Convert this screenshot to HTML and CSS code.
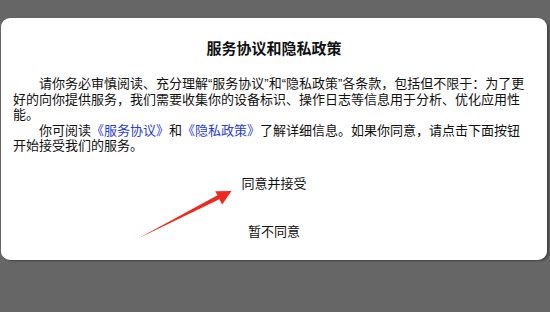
FILE: index.html
```html
<!DOCTYPE html>
<html lang="zh-CN">
<head>
<meta charset="utf-8">
<title>服务协议和隐私政策</title>
<link rel="stylesheet" href="styles.css">
</head>
<body>
<div class="screen">
  <div class="dialog">
    <h1 class="title">服务协议和隐私政策</h1>
    <div class="content">
      <p class="para">请你务必审慎阅读、充分理解“服务协议”和“隐私政策”各条款，包括但不限于：为了更好的向你提供服务，我们需要收集你的设备标识、操作日志等信息用于分析、优化应用性能。</p>
      <p class="para">你可阅读<a class="link">《服务协议》</a>和<a class="link">《隐私政策》</a>了解详细信息。如果你同意，请点击下面按钮开始接受我们的服务。</p>
    </div>
    <div class="actions">
      <div class="btn btn-accept">同意并接受</div>
      <div class="btn btn-reject">暂不同意</div>
    </div>
  </div>
  <svg class="arrow" width="550" height="312" viewBox="0 0 550 312">
    <polygon fill="#ee2a1e" points="138,238.5 219.4,199.3 222.2,204.5 231.5,191 215.2,191.3 217.6,195.3"/>
  </svg>
</div>
</body>
</html>
```
FILE: styles.css
```css
html, body {
  margin: 0;
  padding: 0;
}
body {
  background: #666666;
  font-family: "Liberation Sans", "Noto Sans CJK SC", sans-serif;
  color: #111;
}
.screen {
  position: relative;
  width: 550px;
  height: 312px;
  padding-top: 18px;
  box-sizing: border-box;
}
.dialog {
  margin-left: 1px;
  width: 546px;
  height: 242px;
  background: #fff;
  border-radius: 9px;
  box-shadow: 2px 1px 2px rgba(0, 0, 0, 0.35);
  box-sizing: border-box;
  padding-top: 21px;
  display: flex;
  flex-direction: column;
}
.title {
  margin: 0;
  font-size: 15px;
  line-height: 20px;
  font-weight: bold;
  text-align: center;
  color: #111;
}
.content {
  margin-top: 17px;
  padding: 0 17px 0 12px;
}
.para {
  margin: 0;
  font-size: 13px;
  line-height: 15.5px;
  text-indent: 2em;
}
.link {
  display: inline-block;
  text-indent: 0;
  line-height: 15.5px;
  color: #2a3dcf;
}
.actions {
  margin-top: 9px;
  display: flex;
  flex-direction: column;
  align-items: center;
}
.btn {
  height: 40px;
  display: flex;
  align-items: center;
  justify-content: center;
  font-size: 13px;
  color: #111;
}
.btn-reject {
  margin-top: 8px;
}
.arrow {
  position: absolute;
  left: 0;
  top: 0;
}
```
